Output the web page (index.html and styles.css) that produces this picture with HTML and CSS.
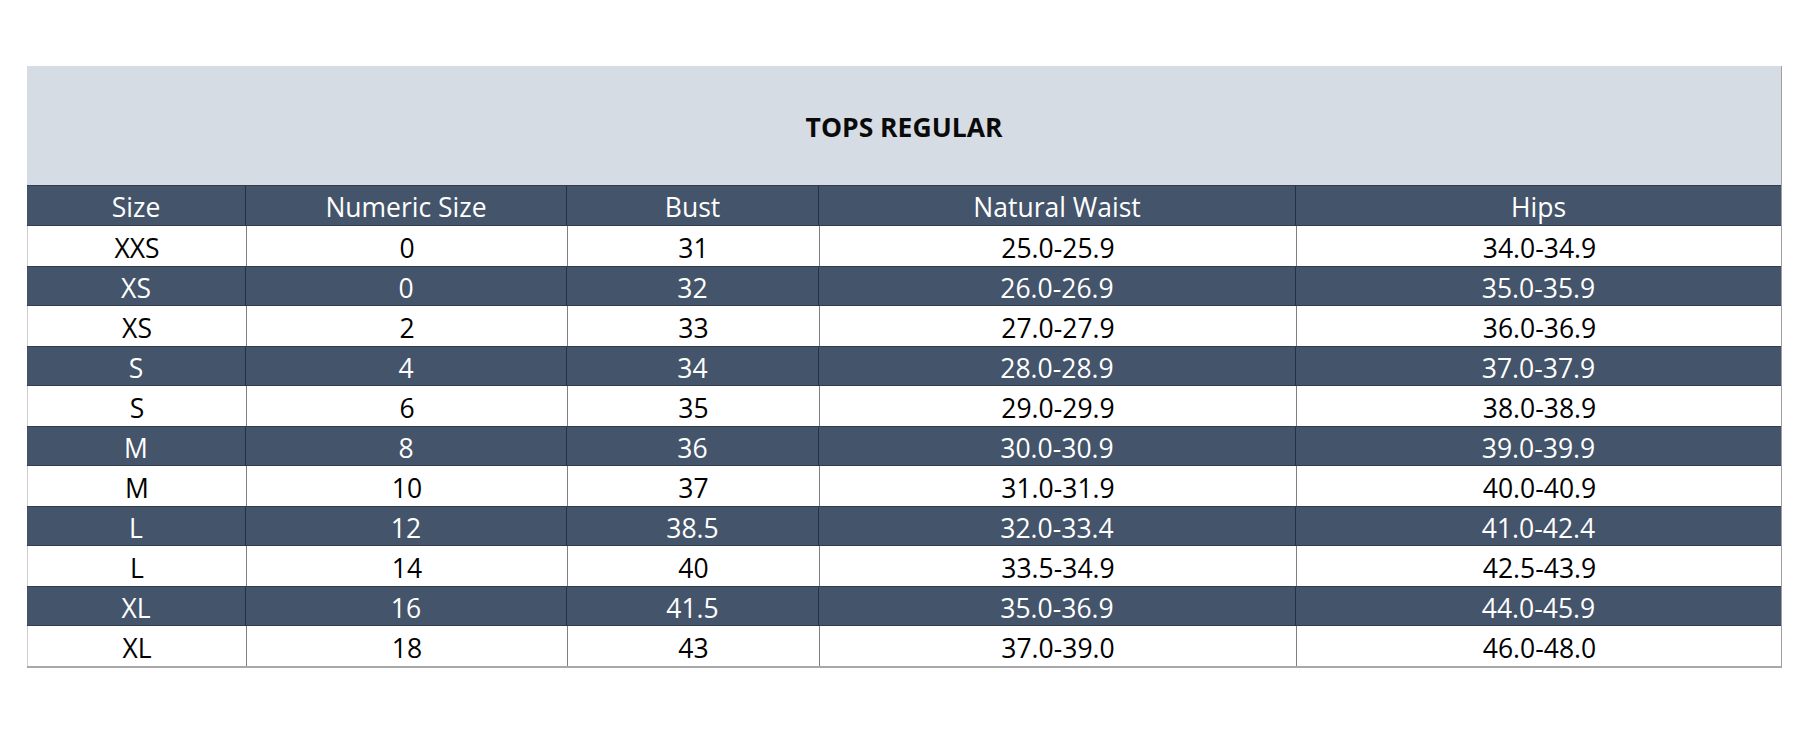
FILE: index.html
```html
<!DOCTYPE html>
<html lang="en">
<head>
<meta charset="utf-8">
<title>Tops Regular Size Chart</title>
<link rel="stylesheet" href="styles.css">
</head>
<body>
<div class="page">
  <div class="chart" role="table" aria-label="Tops regular size chart">
    <div class="title" role="caption">TOPS REGULAR</div>
    <div class="row head" role="row"><div class="cell">Size</div><div class="cell">Numeric Size</div><div class="cell">Bust</div><div class="cell">Natural Waist</div><div class="cell">Hips</div></div>
    <div class="row light" role="row"><div class="cell">XXS</div><div class="cell">0</div><div class="cell">31</div><div class="cell">25.0-25.9</div><div class="cell">34.0-34.9</div></div>
    <div class="row dark" role="row"><div class="cell">XS</div><div class="cell">0</div><div class="cell">32</div><div class="cell">26.0-26.9</div><div class="cell">35.0-35.9</div></div>
    <div class="row light" role="row"><div class="cell">XS</div><div class="cell">2</div><div class="cell">33</div><div class="cell">27.0-27.9</div><div class="cell">36.0-36.9</div></div>
    <div class="row dark" role="row"><div class="cell">S</div><div class="cell">4</div><div class="cell">34</div><div class="cell">28.0-28.9</div><div class="cell">37.0-37.9</div></div>
    <div class="row light" role="row"><div class="cell">S</div><div class="cell">6</div><div class="cell">35</div><div class="cell">29.0-29.9</div><div class="cell">38.0-38.9</div></div>
    <div class="row dark" role="row"><div class="cell">M</div><div class="cell">8</div><div class="cell">36</div><div class="cell">30.0-30.9</div><div class="cell">39.0-39.9</div></div>
    <div class="row light" role="row"><div class="cell">M</div><div class="cell">10</div><div class="cell">37</div><div class="cell">31.0-31.9</div><div class="cell">40.0-40.9</div></div>
    <div class="row dark" role="row"><div class="cell">L</div><div class="cell">12</div><div class="cell">38.5</div><div class="cell">32.0-33.4</div><div class="cell">41.0-42.4</div></div>
    <div class="row light" role="row"><div class="cell">L</div><div class="cell">14</div><div class="cell">40</div><div class="cell">33.5-34.9</div><div class="cell">42.5-43.9</div></div>
    <div class="row dark" role="row"><div class="cell">XL</div><div class="cell">16</div><div class="cell">41.5</div><div class="cell">35.0-36.9</div><div class="cell">44.0-45.9</div></div>
    <div class="row light" role="row"><div class="cell">XL</div><div class="cell">18</div><div class="cell">43</div><div class="cell">37.0-39.0</div><div class="cell">46.0-48.0</div></div>
  </div>
</div>
</body>
</html>
```

FILE: styles.css
```css
* { box-sizing: border-box; }

html, body {
  margin: 0;
  background: #ffffff;
}

body {
  font-family: "Open Sans", "Liberation Sans", sans-serif;
}

.page {
  padding: 66px 0 0 27px;
}

.chart {
  width: 1755px;
  border-right: 1px solid #a0a0a0;
  border-bottom: 2px solid #a8a8a8;
}

.title {
  height: 119px;
  background: #d6dce4;
  display: flex;
  align-items: center;
  justify-content: center;
  font-weight: 700;
  font-size: 26.5px;
  color: #0a0a0a;
  padding-top: 2px;
}

.row {
  display: grid;
  grid-template-columns: 219px 321px 252px 477px 485px;
  height: 40px;
  font-size: 26.5px;
}

.cell {
  display: flex;
  align-items: center;
  justify-content: center;
  padding-top: 3px;
  white-space: nowrap;
}

.head,
.dark {
  background: #44546a;
  color: #ffffff;
  border-top: 1px solid #313d4e;
  border-bottom: 1px solid #313d4e;
}

.head {
  height: 41px;
}

.head .cell,
.dark .cell {
  border-right: 1px solid #26313f;
}

.light {
  background: #ffffff;
  color: #000000;
  border-left: 1px solid #cfcfcf;
}

.light .cell {
  border-right: 1px solid #808080;
}

.row .cell:last-child {
  border-right: none;
}
```
